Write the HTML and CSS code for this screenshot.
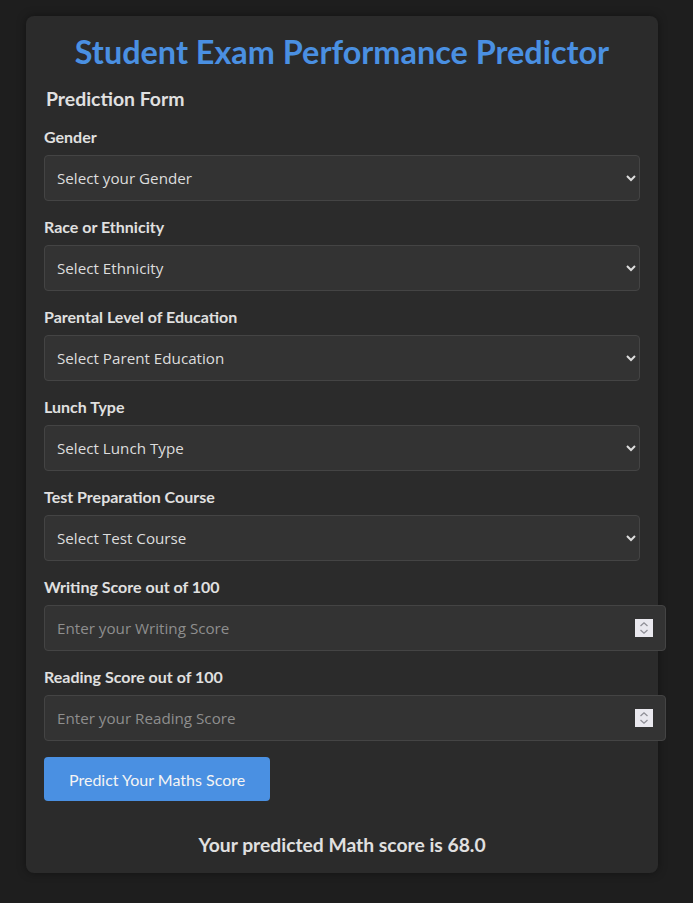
FILE: index.html
```html
<!DOCTYPE html>
<html lang="en">
<head>
<meta charset="utf-8">
<title>Student Exam Performance Predictor</title>
<link rel="stylesheet" href="styles.css">
</head>
<body>
<div class="card">
  <h1 class="title">Student Exam Performance Predictor</h1>
  <form class="form">
    <h2 class="legend">Prediction Form</h2>
    <div class="field">
      <label class="label">Gender</label>
      <select class="control select"><option>Select your Gender</option></select>
    </div>
    <div class="field">
      <label class="label">Race or Ethnicity</label>
      <select class="control select"><option>Select Ethnicity</option></select>
    </div>
    <div class="field">
      <label class="label">Parental Level of Education</label>
      <select class="control select"><option>Select Parent Education</option></select>
    </div>
    <div class="field">
      <label class="label">Lunch Type</label>
      <select class="control select"><option>Select Lunch Type</option></select>
    </div>
    <div class="field">
      <label class="label">Test Preparation Course</label>
      <select class="control select"><option>Select Test Course</option></select>
    </div>
    <div class="field">
      <label class="label">Writing Score out of 100</label>
      <div class="input-wrap">
        <input class="control input" type="number" placeholder="Enter your Writing Score">
        <span class="spinner"><svg width="18" height="18" viewBox="0 0 18 18"><path d="M5.5 7 L9 3.8 L12.5 7 M5.5 11 L9 14.2 L12.5 11" fill="none" stroke="#8f8f96" stroke-width="1.3"/></svg></span>
      </div>
    </div>
    <div class="field">
      <label class="label">Reading Score out of 100</label>
      <div class="input-wrap">
        <input class="control input" type="number" placeholder="Enter your Reading Score">
        <span class="spinner"><svg width="18" height="18" viewBox="0 0 18 18"><path d="M5.5 7 L9 3.8 L12.5 7 M5.5 11 L9 14.2 L12.5 11" fill="none" stroke="#8f8f96" stroke-width="1.3"/></svg></span>
      </div>
    </div>
    <div class="actions">
      <button class="btn" type="button">Predict Your Maths Score</button>
    </div>
  </form>
  <p class="result">Your predicted Math score is 68.0</p>
</div>
</body>
</html>
```
FILE: styles.css
```css
html, body {
  margin: 0;
  background: #1e1e1e;
}
body {
  padding: 16px 35px 31px 26px;
  font-family: Lato, "Open Sans", sans-serif;
  color: #e0e0e0;
}
.card {
  background: #2b2b2b;
  border-radius: 8px;
  padding: 17px 18px 16px;
  box-shadow: 0 0 10px rgba(0,0,0,0.4);
}
.title {
  margin: 0;
  text-align: center;
  color: #4a90e2;
  font-size: 32.4px;
  font-weight: 700;
  line-height: 38px;
}
.form {
  display: flex;
  flex-direction: column;
}
.legend {
  margin: 16px 0 0 2px;
  font-size: 19.4px;
  font-weight: 700;
  line-height: 24px;
  color: #e0e0e0;
}
.field {
  display: flex;
  flex-direction: column;
  margin-top: 16px;
}
.label {
  font-size: 16px;
  font-weight: 700;
  line-height: 20px;
  margin-bottom: 8px;
  color: #e0e0e0;
}
.control {
  height: 46px;
  background: #333333;
  border: 1px solid #444444;
  border-radius: 4px;
  color: #dddddd;
  font-family: "Open Sans", Lato, sans-serif;
  font-size: 15.2px;
  width: 100%;
  box-sizing: border-box;
}
.select {
  padding: 0 8px;
}
.input-wrap {
  position: relative;
}
.input {
  box-sizing: content-box;
  height: 44px;
  padding: 0 12px;
  display: block;
  appearance: textfield;
  -moz-appearance: textfield;
}
.input::-webkit-inner-spin-button,
.input::-webkit-outer-spin-button {
  -webkit-appearance: none;
  margin: 0;
}
.input::placeholder {
  color: #8e8e8e;
}
.spinner {
  position: absolute;
  right: -13px;
  top: 14px;
  width: 18px;
  height: 18px;
  background: #e9e8ee;
  display: block;
}
.spinner svg {
  display: block;
}
.actions {
  margin-top: 16px;
}
.btn {
  background: #4a90e2;
  color: #f4f4f4;
  border: none;
  border-radius: 4px;
  height: 44px;
  padding: 0 25px;
  font-family: Lato, sans-serif;
  font-size: 16px;
}
.result {
  margin: 32px 0 0;
  text-align: center;
  font-size: 19.3px;
  font-weight: 700;
  color: #e0e0e0;
  line-height: 24px;
}
```
